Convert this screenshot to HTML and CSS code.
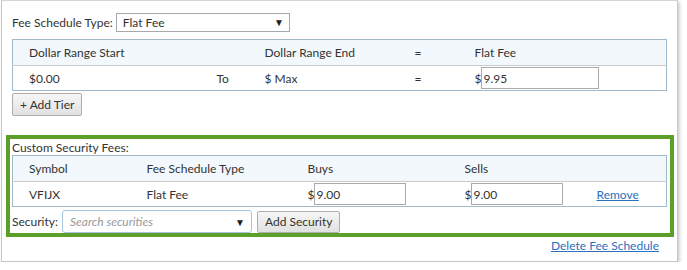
FILE: index.html
```html
<!DOCTYPE html>
<html lang="en">
<head>
    <meta charset="UTF-8">
    <title>Fee Schedule</title>
    <link rel="stylesheet" href="styles.css">
</head>
<body>
    <div class="panel">
        <div class="type-row">
            <label>Fee Schedule Type:</label>
            <div class="select type-select">
                <span>Flat Fee</span>
                <span class="arrow">&#9660;</span>
            </div>
        </div>

        <table class="grid tiers">
            <colgroup>
                <col style="width:188px">
                <col style="width:48px">
                <col style="width:150px">
                <col style="width:60px">
                <col>
            </colgroup>
            <thead>
                <tr>
                    <th>Dollar Range Start</th>
                    <th></th>
                    <th>Dollar Range End</th>
                    <th>=</th>
                    <th>Flat Fee</th>
                </tr>
            </thead>
            <tbody>
                <tr>
                    <td>$0.00</td>
                    <td>To</td>
                    <td>$ Max</td>
                    <td>=</td>
                    <td><span class="money">$<span class="input fee-input">9.95</span></span></td>
                </tr>
            </tbody>
        </table>
        <div class="tier-actions">
            <button class="btn">+ Add Tier</button>
        </div>

        <div class="custom-fees">
            <div class="section-title">Custom Security Fees:</div>
            <table class="grid securities">
                <colgroup>
                    <col style="width:118px">
                    <col style="width:161px">
                    <col style="width:157px">
                    <col style="width:132px">
                    <col>
                </colgroup>
                <thead>
                    <tr>
                        <th>Symbol</th>
                        <th>Fee Schedule Type</th>
                        <th>Buys</th>
                        <th>Sells</th>
                        <th></th>
                    </tr>
                </thead>
                <tbody>
                    <tr>
                        <td>VFIJX</td>
                        <td>Flat Fee</td>
                        <td><span class="money">$<span class="input price-input">9.00</span></span></td>
                        <td><span class="money">$<span class="input price-input">9.00</span></span></td>
                        <td><a href="#" class="link">Remove</a></td>
                    </tr>
                </tbody>
            </table>
            <div class="security-row">
                <label>Security:</label>
                <div class="select search-select">
                    <span class="placeholder">Search securities</span>
                    <span class="arrow">&#9660;</span>
                </div>
                <button class="btn">Add Security</button>
            </div>
        </div>

        <div class="footer">
            <a href="#" class="link">Delete Fee Schedule</a>
        </div>
    </div>
</body>
</html>
```
FILE: styles.css
```css
body {
    margin: 0;
    background-color: #fff;
    font-family: 'Lato', sans-serif;
    font-size: 12px;
    color: #333;
}

.panel {
    width: 668px;
    height: 260px;
    margin-left: 1px;
    padding: 0 3px 0 4px;
    border: 1px solid #c6c6c6;
    border-top-color: #d4d4d4;
    box-shadow: 2px 2px 3px rgba(0, 0, 0, 0.18);
    box-sizing: content-box;
}

.type-row {
    display: flex;
    align-items: center;
    gap: 3px;
    padding: 11px 6px 0;
    height: 20px;
}

.select {
    display: flex;
    align-items: center;
    justify-content: space-between;
    box-sizing: border-box;
    background-color: #fff;
}

.type-select {
    width: 174px;
    height: 19px;
    padding: 0 5px 0 6px;
    border: 1px solid #a9a9a9;
}

.arrow {
    font-size: 10px;
    color: #222;
}

.grid {
    border-collapse: collapse;
    table-layout: fixed;
    width: 655px;
    border: 1px solid #9fb9ca;
}

.grid th {
    height: 25px;
    padding: 0 0 0 16px;
    text-align: left;
    font-weight: 400;
    background-color: #f2f8fc;
    border-bottom: 1px solid #c9cccf;
}

.grid td {
    height: 24px;
    padding: 0 0 0 16px;
}

.tiers {
    margin: 7px 0 0 6px;
}

.money {
    display: flex;
    align-items: center;
    gap: 0;
}

.input {
    display: flex;
    align-items: center;
    box-sizing: border-box;
    height: 22px;
    padding-left: 1px;
    border: 1px solid #aaa;
    background-color: #fff;
}

.fee-input {
    width: 118px;
}

.price-input {
    width: 92px;
}

.tier-actions {
    padding: 2px 6px 0;
}

.btn {
    height: 23px;
    padding: 0 7px;
    font-family: 'Lato', sans-serif;
    font-size: 12px;
    color: #333;
    border: 1px solid #adadad;
    border-radius: 2px;
    background: linear-gradient(#f6f6f6, #e1e1e1);
}

.custom-fees {
    margin-top: 19px;
    padding: 0 2px;
    height: 94px;
    border: 4px solid #5c9f2b;
}

.section-title {
    height: 16px;
    line-height: 18px;
}

.security-row {
    display: flex;
    align-items: center;
    gap: 4px;
    margin-top: 3px;
}

.search-select {
    width: 190px;
    height: 23px;
    padding: 0 6px 0 7px;
    border: 1px solid #a8c5de;
    border-radius: 3px;
}

.placeholder {
    font-style: italic;
    color: #9a9a9a;
}

.security-row .btn {
    height: 22px;
    margin-left: 1px;
}

.link {
    color: #2a6fc0;
    text-decoration: underline;
}

.footer {
    display: flex;
    justify-content: flex-end;
    padding: 1px 15px 0 0;
}
```
